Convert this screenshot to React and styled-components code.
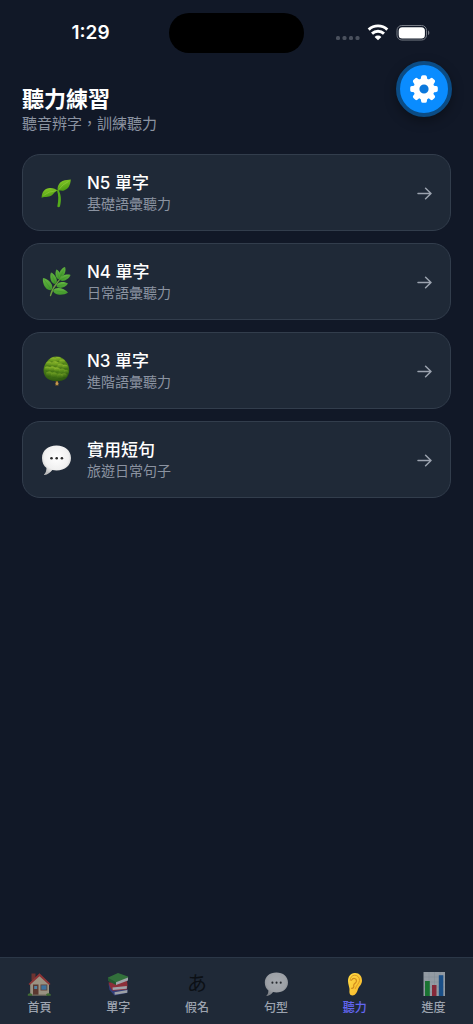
import React from 'react';
import styled, { createGlobalStyle } from 'styled-components';

const GlobalStyle = createGlobalStyle`
  *, *::before, *::after { box-sizing: border-box; }
  body {
    margin: 0;
    background: #111827;
    color: #ffffff;
    font-family: Inter, "Noto Sans CJK TC", sans-serif;
    -webkit-font-smoothing: antialiased;
  }
  button { font: inherit; color: inherit; }
`;

const Screen = styled.div`
  position: relative;
  display: flex;
  flex-direction: column;
  min-height: 100vh;
`;

const StatusBar = styled.div`
  display: grid;
  grid-template-columns: 1fr 135px 1fr;
  align-items: center;
  height: 66px;
`;

const Clock = styled.time`
  justify-self: center;
  padding-left: 12px;
  font-size: 19px;
  line-height: 24px;
  font-weight: 600;
`;

const Island = styled.div`
  height: 40px;
  border-radius: 20px;
  background: #000000;
`;

const StatusIcons = styled.div`
  display: flex;
  justify-content: center;
  padding-right: 12px;
  svg { display: block; }
`;

const SettingsButton = styled.button`
  position: absolute;
  top: 61px;
  right: 21px;
  display: grid;
  place-items: center;
  width: 56px;
  height: 56px;
  padding: 0;
  border: 4px solid #0b4c85;
  border-radius: 50%;
  background: #0a8cff;
  box-shadow: 0 4px 12px rgba(0, 0, 0, 0.35);
  cursor: pointer;
  svg { display: block; }
`;

const Main = styled.main`
  flex: 1;
  padding: 18px 22px 22px;
`;

const Header = styled.header`
  margin-bottom: 20px;
`;

const Title = styled.h1`
  margin: 0;
  font-size: 22px;
  line-height: 30px;
  font-weight: 700;
`;

const Subtitle = styled.p`
  margin: 0;
  font-size: 15px;
  line-height: 20px;
  color: #8b93a1;
  font-weight: 400;
`;

const LevelList = styled.div`
  display: flex;
  flex-direction: column;
  gap: 12px;
`;

const LevelCard = styled.button`
  display: flex;
  align-items: center;
  gap: 16px;
  width: 100%;
  min-height: 77px;
  padding: 17px 18px 16px;
  border: 1px solid #323d4c;
  border-radius: 18px;
  background: #1f2937;
  text-align: left;
  cursor: pointer;
  svg { display: block; flex: none; }
`;

const LevelText = styled.span`
  display: flex;
  flex: 1;
  flex-direction: column;
`;

const LevelName = styled.span`
  font-size: 17px;
  line-height: 22px;
  font-weight: 500;
`;

const LevelNote = styled.span`
  font-size: 14px;
  line-height: 20px;
  font-weight: 400;
  color: #8b93a1;
`;

const TabBar = styled.nav`
  position: sticky;
  bottom: 0;
  display: grid;
  grid-template-columns: repeat(6, 1fr);
  padding: 14px 0 8px;
  border-top: 1px solid #2b3747;
  background: #1f2937;
`;

const Tab = styled.a`
  display: flex;
  flex-direction: column;
  align-items: center;
  gap: 4px;
  color: ${(p) => (p.$active ? '#6366f1' : '#9ca3af')};
  text-decoration: none;
`;

const TabIcon = styled.span`
  display: grid;
  place-items: center;
  width: 24px;
  height: 24px;
  color: #000000;
  font-size: 20px;
  line-height: 24px;
  opacity: ${(p) => (p.$active ? 1 : 0.6)};
  svg { display: block; }
`;

const TabLabel = styled.span`
  font-size: 12px;
  line-height: 16px;
  font-weight: 500;
`;

function Sprout() {
  return (
    <svg width="30" height="30" viewBox="0 0 30 30" aria-hidden="true">
      <defs>
        <linearGradient id="sproutLeaf" x1="0" y1="0" x2="0.4" y2="1">
          <stop offset="0" stopColor="#8fd02a" />
          <stop offset="1" stopColor="#4a9a12" />
        </linearGradient>
      </defs>
      <path d="M16 12.600C17.600 17 17.700 22 16.300 28.600q1.300 1.200 2.600 0C20.700 22 20 16.500 17.600 12z" fill="#55ad1b" />
      <path d="M.6 19.800C.8 13.500 4 10 9 9.900c3.200-.1 5.800 1.200 8.200 2.700-2.500.6-3.500 1.600-5 3.400C9 19.800 4.500 18.300.6 19.800z" fill="url(#sproutLeaf)" />
      <path d="M16.800 13C16 8.500 18 4.500 21.600 3 24.500 1.900 27.500 2.300 29.800 1.600c-.3 5.500-2.600 9.900-6.800 10.900-2.700.6-4.400-.5-6.200.5z" fill="url(#sproutLeaf)" />
      <path d="M2.500 17.500Q8 13 15 12.800M18 11.500Q21 6.500 27.500 3.500" fill="none" stroke="#b3df5d" strokeWidth=".5" opacity=".7" />
    </svg>
  );
}

const herbLeaves = [
  [2, 11, 10.5, 23, 5.5],
  [10, 5.5, 14.5, 17, 4.5],
  [15.5, 2.5, 18.5, 12.5, 4],
  [24, 0, 19.5, 9.5, 4],
  [29.5, 8, 19, 13, 4],
  [27, 16.5, 15.5, 19, 4.5],
  [27, 25.5, 12, 23.5, 5.2],
];

function Herb() {
  return (
    <svg width="30" height="30" viewBox="0 0 30 30" aria-hidden="true">
      <defs>
        <linearGradient id="herbLeaf" x1="0" y1="0" x2="0" y2="1">
          <stop offset="0" stopColor="#67b744" />
          <stop offset="1" stopColor="#3f962a" />
        </linearGradient>
      </defs>
      <path d="M9.500 28.500Q11 22 16 16T21.500 6" fill="none" stroke="#6c9c3e" strokeWidth="1.300" strokeLinecap="round" />
      {herbLeaves.map(([x1, y1, x2, y2, w]) => {
        const len = Math.hypot(x2 - x1, y2 - y1);
        const nx = (-(y2 - y1) / len) * w;
        const ny = ((x2 - x1) / len) * w;
        const ax = x1 + (x2 - x1) * 0.25;
        const ay = y1 + (y2 - y1) * 0.25;
        const bx = x1 + (x2 - x1) * 0.85;
        const by = y1 + (y2 - y1) * 0.85;
        return (
          <g key={`${x1}-${y1}`}>
            <path
              d={`M${x1} ${y1}C${ax + nx * 0.7} ${ay + ny * 0.7} ${bx + nx} ${by + ny} ${x2} ${y2}C${bx - nx} ${by - ny} ${ax - nx * 0.7} ${ay - ny * 0.7} ${x1} ${y1}z`}
              fill="url(#herbLeaf)"
            />
            <path d={`M${x1} ${y1}L${x2} ${y2}`} stroke="#2f7a20" strokeWidth=".5" opacity=".5" />
          </g>
        );
      })}
    </svg>
  );
}

const foliage = [
  [12, 4, 3.2], [17, 3.5, 3], [21, 6, 3], [8, 8, 3.2], [14, 8, 3.4], [19.5, 10, 3.2],
  [24, 11, 2.8], [6.5, 13, 3], [11.5, 13, 3.2], [16, 14, 3], [21, 15, 3.2], [25, 16, 2.5],
  [8, 18, 3], [13, 19, 3.2], [19, 20, 3.2], [23, 19.5, 2.8],
];

function Tree() {
  return (
    <svg width="30" height="30" viewBox="0 0 30 30" aria-hidden="true">
      <defs>
        <radialGradient id="treeCrown" cx=".45" cy=".2" r=".85">
          <stop offset="0" stopColor="#76a520" />
          <stop offset=".6" stopColor="#4b7f17" />
          <stop offset="1" stopColor="#28520e" />
        </radialGradient>
        <linearGradient id="treeClump" x1="0" y1="0" x2="0" y2="1">
          <stop offset="0" stopColor="#b1d43b" stopOpacity=".8" />
          <stop offset=".6" stopColor="#6b9c20" stopOpacity=".4" />
          <stop offset="1" stopColor="#234c0d" stopOpacity=".7" />
        </linearGradient>
      </defs>
      <path d="M14.600 23h2.600l-.3 5 .8 1.500h-3.600l.8-1.500z" fill="#8a6229" />
      <path d="M15.500.5c4 0 7.500 2 9.500 5 2.800 3 3.700 7 3 11-1 4.500-3.500 7.500-7.500 8.200-3 .5-6 .5-9 0C7 24 3.500 21 2.700 16.500c-.7-4 .5-8 3.300-11C8.500 2.300 11.500.5 15.500.5z" fill="url(#treeCrown)" />
      {foliage.map(([x, y, r]) => (
        <ellipse key={`${x}-${y}`} cx={x} cy={y} rx={r} ry={r * 0.8} fill="url(#treeClump)" opacity={y > 14 ? 0.5 : 0.85} />
      ))}
      <circle cx="16" cy="27.500" r="1.500" fill="#c79a50" />
    </svg>
  );
}

function Bubble({ size, id }) {
  return (
    <svg width={size} height={size} viewBox="0 0 30 30" aria-hidden="true">
      <defs>
        <radialGradient id={id} cx=".5" cy=".4" r=".6">
          <stop offset="0" stopColor="#ffffff" />
          <stop offset=".7" stopColor="#f0f0f0" />
          <stop offset="1" stopColor="#bdbdbd" />
        </radialGradient>
      </defs>
      <path d="M15.500.5C24 .5 30 5.500 30 13s-6 12.500-14.500 12.500c-1.500 0-3-.2-4.200-.5C9.500 27.500 6.500 29.800 3.500 30c-.6 0-.5-.6 0-1 1.200-1.200 1.800-3 2-6C2.800 21 1 17.500 1 13 1 5.500 7 .5 15.500.5z" fill={`url(#${id})`} />
      <g fill="#2b2b2b">
        <circle cx="10.500" cy="13.300" r="1.300" />
        <circle cx="15.700" cy="13.300" r="1.300" />
        <circle cx="20.900" cy="13.300" r="1.300" />
      </g>
    </svg>
  );
}

function Arrow() {
  return (
    <svg width="15" height="15" viewBox="0 0 15 15" fill="none" stroke="#9ca3af" strokeWidth="1.500" strokeLinecap="round" strokeLinejoin="round" aria-hidden="true">
      <path d="M1 7.500h13M8.600 2.300l5.400 5.200-5.400 5.200" />
    </svg>
  );
}

function House() {
  return (
    <svg width="24" height="24" viewBox="0 0 24 24" aria-hidden="true">
      <path d="M4.500 1.500h4v7h-4z" fill="#a33a2c" />
      <path d="M3.200 11 12.500 2.500 22 11v12H3.200z" fill="#ecd9b4" />
      <path d="M1.500 12 12.500 1.200 23.500 12l-1.300 1L12.500 4.200 2.800 13z" fill="#d63b34" />
      <path d="M6 12.500h5.500V23H6z" fill="#83432c" />
      <path d="M7.200 14h3v3h-3z" fill="#75bdea" />
      <path d="M13.500 12.500h6.800v6h-6.800z" fill="#8b5337" />
      <path d="M14.300 13.300h5.200v4.400h-5.200z" fill="#52a4e4" />
      <path d="M.8 22.300q2-2.300 4.500 0v1.500H.8zM19 22.300q2.500-2.300 4.700 0v1.500H19z" fill="#5a9a32" />
      <path d="M5 22.500h14.500v1.300H5z" fill="#a8957a" />
    </svg>
  );
}

function Books() {
  return (
    <svg width="24" height="24" viewBox="0 0 24 24" aria-hidden="true">
      <path d="M2.500 11.500 9 15l13 2.500-.8 3.500L8.500 23.500 3.500 18z" fill="#3f4da5" />
      <path d="M8.500 20.300 21.300 18v2.700L8.800 22.800z" fill="#f0f0f0" />
      <path d="M2.500 10.500 9 10l12-1 .5 4-.5 4.500-14.500 1.300L4 15z" fill="#d5343b" />
      <path d="M6.500 15.600 20.800 14v2.700L6.800 18z" fill="#f5f5f5" />
      <path d="M2 5.500 12 1l10 3.500.3 1-12.500 7L2.500 9z" fill="#40a03e" />
      <path d="M10 10.300 22 5.500v3L10 13z" fill="#f6f6f6" />
      <path d="M2 5.800 9.700 10l.3 3L2.500 9z" fill="#287a2d" />
    </svg>
  );
}

function Ear() {
  return (
    <svg width="24" height="24" viewBox="0 0 24 24" aria-hidden="true">
      <defs>
        <linearGradient id="earSkin" x1="0" y1="0" x2="1" y2="1">
          <stop offset="0" stopColor="#ffdc45" />
          <stop offset="1" stopColor="#f7b52a" />
        </linearGradient>
      </defs>
      <path d="M11.500 1C16 .5 19 4 19 8.500c0 4-2.800 5.500-4 8.500-1 3.500-2.500 6.500-5.500 6.500S6.200 20.500 6.500 18c.3-2-1.500-5.500-1.500-9C5 4.500 7.500 1.300 11.500 1z" fill="url(#earSkin)" />
      <path d="M7.200 8.500c0-3.500 2-5.300 4.600-5.300s5 2.300 4.700 5.300c-.3 3-3 4.500-4.200 8" fill="none" stroke="#dc9a25" strokeWidth="1" strokeLinecap="round" />
      <path d="M8.500 8.200c1.500-3 5.200-2 4.900 1-.2 2-2.200 2-2.700 4 .6 2.200-.6 3.400-2.200 3.100" fill="none" stroke="#cf8a1d" strokeWidth="1.100" strokeLinecap="round" />
    </svg>
  );
}

function Chart() {
  return (
    <svg width="24" height="24" viewBox="0 0 24 24" aria-hidden="true">
      <path d="M1.500 0h21.500v24H1.500z" fill="#dfe6ea" />
      <path d="M2 5h20.500M2 10h20.500M2 15h20.500M2 20h20.500M7 0v24M12.500 0v24M18 0v24" stroke="#bccbd3" strokeWidth=".5" />
      <path d="M3 9h4.800v15H3z" fill="#17a52f" />
      <path d="M10 13h4.500v11H10z" fill="#c92639" />
      <path d="M16.800 3.200h4.500V24h-4.500z" fill="#1769bd" />
    </svg>
  );
}

function Gear() {
  return (
    <svg width="28" height="28" viewBox="-14 -14 28 28" aria-hidden="true">
      <circle r="6" fill="#0b78dc" />
      <g fill="#ffffff">
        {[0, 45, 90, 135, 180, 225, 270, 315].map((a) => (
          <path key={a} transform={`rotate(${a})`} d="M-4.300-8.800C-3.200-9.800-3.100-10.500-2.900-12.200q.2-1.600 1.700-1.600h2.400q1.500 0 1.700 1.600C3.100-10.500 3.200-9.800 4.300-8.800z" />
        ))}
        <path fillRule="evenodd" d="M0-10.400a10.400 10.400 0 1 0 0 20.800a10.400 10.400 0 1 0 0-20.800zM0-4.600a4.600 4.600 0 1 1 0 9.200a4.600 4.600 0 1 1 0-9.200z" />
      </g>
    </svg>
  );
}

function DeviceStatus() {
  return (
    <svg width="94" height="18" viewBox="0 0 94 18" role="img" aria-label="Wi-Fi, 電池">
      <g fill="#4a505d">
        <rect x="0" y="12" width="4" height="4" rx="1.500" />
        <rect x="6.500" y="12" width="4" height="4" rx="1.500" />
        <rect x="13" y="12" width="4" height="4" rx="1.500" />
        <rect x="19.500" y="12" width="4" height="4" rx="1.500" />
      </g>
      <g fill="none" stroke="#ffffff" strokeWidth="2.900">
        <path d="M32.700 5.600a13.500 13.500 0 0 1 18.600 0" />
        <path d="M36 9.600a8.700 8.700 0 0 1 12 0" />
      </g>
      <path d="M42 16.300l-3.400-3.400a4.800 4.800 0 0 1 6.800 0z" fill="#ffffff" />
      <rect x="61" y="1.500" width="29.500" height="14.500" rx="4.800" fill="none" stroke="#777c86" />
      <rect x="62.700" y="3.200" width="26.200" height="11.200" rx="3.500" fill="#ffffff" />
      <path d="M92 6.500c1.800.6 1.800 4 0 4.600z" fill="#777c86" />
    </svg>
  );
}

const levels = [
  { name: 'N5 單字', note: '基礎語彙聽力', icon: <Sprout /> },
  { name: 'N4 單字', note: '日常語彙聽力', icon: <Herb /> },
  { name: 'N3 單字', note: '進階語彙聽力', icon: <Tree /> },
  { name: '實用短句', note: '旅遊日常句子', icon: <Bubble size={30} id="bubbleCard" /> },
];

const tabs = [
  { label: '首頁', href: '#home', icon: <House /> },
  { label: '單字', href: '#words', icon: <Books /> },
  { label: '假名', href: '#kana', icon: 'あ' },
  { label: '句型', href: '#patterns', icon: <Bubble size={24} id="bubbleTab" /> },
  { label: '聽力', href: '#listening', icon: <Ear />, active: true },
  { label: '進度', href: '#progress', icon: <Chart /> },
];

export default function App() {
  return (
    <Screen lang="zh-Hant">
      <GlobalStyle />
      <StatusBar>
        <Clock>1:29</Clock>
        <Island />
        <StatusIcons>
          <DeviceStatus />
        </StatusIcons>
      </StatusBar>
      <SettingsButton type="button" aria-label="設定">
        <Gear />
      </SettingsButton>
      <Main>
        <Header>
          <Title>聽力練習</Title>
          <Subtitle>聽音辨字，訓練聽力</Subtitle>
        </Header>
        <LevelList>
          {levels.map((level) => (
            <LevelCard key={level.name} type="button">
              {level.icon}
              <LevelText>
                <LevelName>{level.name}</LevelName>
                <LevelNote>{level.note}</LevelNote>
              </LevelText>
              <Arrow />
            </LevelCard>
          ))}
        </LevelList>
      </Main>
      <TabBar>
        {tabs.map((tab) => (
          <Tab key={tab.label} href={tab.href} $active={tab.active} aria-current={tab.active ? 'page' : undefined}>
            <TabIcon $active={tab.active}>{tab.icon}</TabIcon>
            <TabLabel>{tab.label}</TabLabel>
          </Tab>
        ))}
      </TabBar>
    </Screen>
  );
}
